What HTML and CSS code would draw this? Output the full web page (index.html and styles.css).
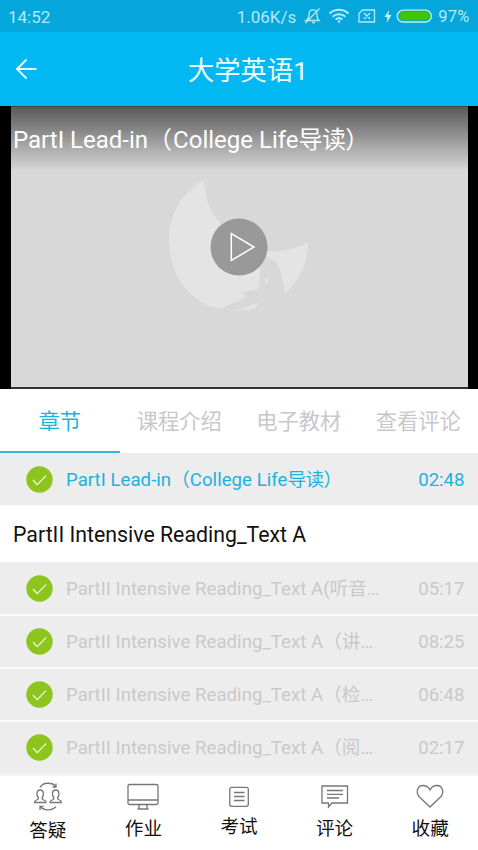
FILE: index.html
```html
<!DOCTYPE html>
<html lang="zh-CN">
<head>
<meta charset="utf-8">
<title>大学英语1</title>
<link rel="stylesheet" href="styles.css">
</head>
<body>
<svg class="defs" width="0" height="0">
  <symbol id="check" viewBox="0 0 27 27"><circle cx="13.5" cy="13.5" r="13.2" fill="#8dc41e"/><path d="M7 14l4.200 4.700 8.900-9" fill="none" stroke="#f4fae6" stroke-width="1.200"/></symbol>
</svg>
<div class="status">
  <span class="clock">14:52</span>
  <span class="speed">1.06K/s</span>
  <svg class="status-icons" width="132" height="32" viewBox="300 0 132 32" fill="none" stroke="#b5e9f8" stroke-width="1.300">
    <path d="M306 20.500h13c-1.800-1.500-2-3-2-6 0-3-1.500-4.600-4-4.600s-4 1.600-4 4.600c0 3-.5 4.500-3 6zM312 22.500h3M319.500 8.500L305.500 23"/>
    <g stroke-width="2"><path d="M329.500 13.500c5.500-5 13.500-5 19 0M332.500 16.700c3.800-3.300 9.200-3.300 13 0M335.600 19.600c2-1.700 4.800-1.700 6.800 0"/></g>
    <circle cx="339" cy="21.500" r="1.200" fill="#b5e9f8" stroke="none"/>
    <path d="M362.500 10H374.500V22H359V13.500zM364 13l6 6M370 13l-6 6"/>
    <path d="M389 10l-4.500 7h3l-1 6 5-8h-3.200z" fill="#d4f4fc" stroke="none"/>
    <rect x="397.200" y="10.200" width="34.200" height="11.800" rx="5.900" stroke="#c3f0dc"/>
    <rect x="399" y="12" width="30.600" height="8.200" rx="4.100" fill="#42c400" stroke="none"/>
  </svg>
  <span class="percent">97%</span>
</div>
<header class="header">
  <svg class="back" width="24" height="24" viewBox="0 0 24 24" fill="none" stroke="#e5fbff" stroke-width="2"><path d="M22.500 12H3.500M12.500 2.500L3 12l9.500 9.500"/></svg>
  <h1 class="title">大学英语1</h1>
</header>
<section class="video">
  <div class="screen">
    <svg class="poster" width="142" height="134" viewBox="168 179 142 134" fill="#e4e4e4">
      <path d="M204 180C181 193 168 215 169 243C171 280 193 304 221 309C229 303 238 303 246 297L241 293C248 289 254 292 259 288L261 256L224 228C212 215 205 202 204 180Z"/>
      <path d="M266 251Q290 253 308 242C308 264 300 279 285 294C283 282 282 268 274 260L266 256Z"/>
      <path d="M265 280l4-3-2 6-2 2zM236 309.500Q245 309 251 305L258 303L255 308Q247 311 236 310.500Z"/>
    </svg>
    <div class="shade"></div>
    <svg class="play" width="58" height="58" viewBox="0 0 58 58"><circle cx="29" cy="29" r="28.500" fill="#999"/><path d="M21.300 15.500V42.500L44 29z" fill="none" stroke="#fff" stroke-width="1.500"/></svg>
    <div class="video-title">PartI Lead-in（<span class="shift">College Life<span class="cjk">导读）</span></span></div>
  </div>
</section>
<nav class="tabs">
  <span class="tab tab-active">章节</span>
  <span class="tab">课程介绍</span>
  <span class="tab">电子教材</span>
  <span class="tab">查看评论</span>
</nav>
<main class="list">
  <div class="row row-active"><svg class="check"><use href="#check"/></svg><span class="name">PartI Lead-in（College Life<span class="cjk">导读）</span></span><span class="time">02:48</span></div>
  <h2 class="heading">PartII Intensive Reading_Text A</h2>
  <div class="row row-first"><svg class="check"><use href="#check"/></svg><span class="name">PartII Intensive Reading_Text A(听音…</span><span class="time">05:17</span></div>
  <div class="row"><svg class="check"><use href="#check"/></svg><span class="name">PartII Intensive Reading_Text A（讲…</span><span class="time">08:25</span></div>
  <div class="row"><svg class="check"><use href="#check"/></svg><span class="name">PartII Intensive Reading_Text A（检…</span><span class="time">06:48</span></div>
  <div class="row row-last"><svg class="check"><use href="#check"/></svg><span class="name">PartII Intensive Reading_Text A（阅…</span><span class="time">02:17</span></div>
</main>
<footer class="bottom">
  <a class="item item-low"><svg width="32" height="32" viewBox="0 0 32 32"><path d="M8 6.500C11 1 20 1 24 5.500M24 2.500V6h-3.500M24 25.500C20 30 12 30 8 25.500M8 29v-3.500h3.500"/><g id="person"><path d="M2.500 21.500c0-3 4-2 4-4.500C4 14 4.500 9 8.200 9s4.200 5 1.800 8c0 2.500 4 1.500 4 4.500z"/></g><use href="#person" x="15.500"/></svg><span>答疑</span></a>
  <a class="item"><svg width="32" height="32" viewBox="0 0 32 32"><rect x="1" y="3.500" width="30" height="20" rx="1.500"/><path d="M1 19H31M12.500 23.500L11.500 28M19.500 23.500L20.500 28M10.500 28h11"/></svg><span>作业</span></a>
  <a class="item item-high"><svg width="32" height="32" viewBox="0 0 32 32"><rect x="6.800" y="6.300" width="18.500" height="19" rx="2"/><path d="M11 11.500H21.500M11 15.500H21.500M11 19.500H21.500"/></svg><span>考试</span></a>
  <a class="item"><svg width="32" height="32" viewBox="0 0 32 32"><path d="M3 5H28.500V22H13L9.500 26V22H3zM8 9.500H24M8 13.300H24M8 17H20"/></svg><span>评论</span></a>
  <a class="item"><svg width="32" height="32" viewBox="0 0 32 32"><path d="M16 26L5 15.500C1.500 11 3.500 4.500 9 4.500c3.500 0 5.700 2 7 4.500 1.300-2.500 3.500-4.500 7-4.500 5.500 0 7.500 6.500 4 11z"/></svg><span>收藏</span></a>
</footer>
</body>
</html>
```
FILE: styles.css
```css
* { box-sizing: border-box; }
body {
  margin: 0;
  width: 478px;
  height: 850px;
  overflow: hidden;
  background: #fff;
  font-family: Roboto, "Noto Sans CJK SC", sans-serif;
  white-space: nowrap;
}
.defs { position: absolute; }
.status {
  height: 32px;
  display: flex;
  align-items: center;
  padding: 1px 8.500px 0 8px;
  background: #04a6dc;
  color: #b5e9f8;
  font-size: 17px;
}
.speed { margin-left: auto; margin-right: 3.500px; }
.status-icons { flex: none; margin-top: -1px; }
.percent { margin-left: 6.500px; font-size: 16.500px; letter-spacing: .2px; }
.header {
  height: 74px;
  display: flex;
  align-items: center;
  padding: 0 14px;
  background: #02b8f3;
}
.title {
  flex: 1;
  margin: 0;
  padding: 4px 0 0 0;
  margin-right: 6px;
  text-align: center;
  color: #effcff;
  font-size: 26.300px;
  line-height: 40px;
  font-weight: 400;
}
.video { height: 283px; padding: 0 10.500px; background: #000; }
.screen {
  position: relative;
  height: 283px;
  background: #d8d8d8;
  border-bottom: 2px solid #333;
  border-top: 1px solid #444;
  overflow: hidden;
}
.poster { position: absolute; left: 157.500px; top: 72px; }
.shade {
  position: absolute;
  inset: 0 0 auto;
  height: 64px;
  background: linear-gradient(#5b5b5b, #858585 35%, #b0b0b0 68%, #d8d8d8);
}
.play { position: absolute; left: 199.500px; top: 111px; }
.video-title {
  position: relative;
  padding: 15px 0 0 2.500px;
  color: #fff;
  font-size: 24px;
  line-height: 36px;
}
.shift { margin-left: 1px; }
.cjk { letter-spacing: -.6px; }
.tabs {
  height: 64px;
  display: grid;
  grid-template-columns: repeat(4, 1fr);
  color: #c8c8cc;
  font-size: 21.300px;
  line-height: 66px;
  text-align: center;
}
.tab-active { color: #1eb1de; border-bottom: 2px solid #35b5dc; height: 64px; }
.row {
  height: 53px;
  display: flex;
  align-items: center;
  padding: 0 13.500px 0 26px;
  background: #ededed;
  border-bottom: 2px solid #fafafa;
  color: #c9c9cb;
  font-size: 18.600px;
  line-height: 47px;
}
.row-first { height: 54px; }
.row-last { border-bottom-color: #f1f1f1; }
.row-active { height: 52px; border-bottom: 0; color: #1eb1de; }
.check { width: 27px; height: 27px; flex: none; margin-right: 13px; }
.name, .time { padding-top: 2px; }
.name { letter-spacing: .04px; }
.time { margin-left: auto; }
.heading {
  margin: 0;
  height: 57px;
  padding: 1px 0 0 13px;
  color: #111;
  font-size: 21.300px;
  font-weight: 400;
  line-height: 57px;
}
.bottom {
  height: 75px;
  display: grid;
  grid-template-columns: repeat(5, 1fr);
  background: #fff;
  border-top: 1px solid #f6f6f6;
  color: #111;
  font-size: 18.600px;
}
.item {
  display: flex;
  flex-direction: column;
  align-items: center;
  padding-top: 5px;
  line-height: 28px;
}
.item svg { width: 32px; height: 32px; fill: none; stroke: #777; stroke-width: 1.300; }
.item span { margin-top: 2px; }
.item-low span { margin-top: 4px; }
.item-high span { margin-top: 0; }
```
